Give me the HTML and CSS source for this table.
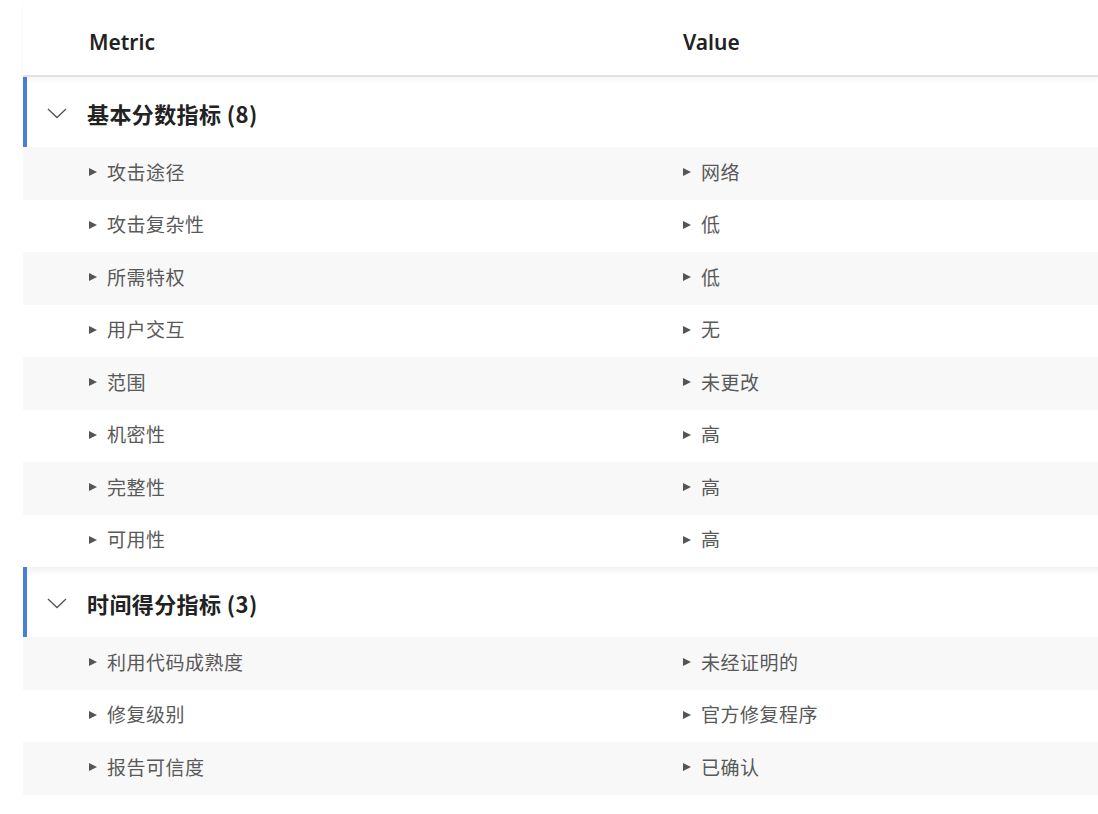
FILE: index.html
```html
<!DOCTYPE html>
<html lang="zh-CN">
<head>
<meta charset="utf-8">
<title>Metrics</title>
<link rel="stylesheet" href="styles.css">
</head>
<body>
<div class="table">
  <div class="head">
    <div class="col">Metric</div>
    <div class="col">Value</div>
  </div>

  <div class="group">
    <div class="ghead">
      <svg class="chev" width="20" height="11" viewBox="0 0 20 11"><polyline points="1,1 10,9.5 19,1" fill="none" stroke="#555" stroke-width="1.3"/></svg>
      <span class="gtitle">基本分数指标 (8)</span>
    </div>
    <div class="row alt"><div class="cell"><i class="tri"></i>攻击途径</div><div class="cell"><i class="tri"></i>网络</div></div>
    <div class="row"><div class="cell"><i class="tri"></i>攻击复杂性</div><div class="cell"><i class="tri"></i>低</div></div>
    <div class="row alt"><div class="cell"><i class="tri"></i>所需特权</div><div class="cell"><i class="tri"></i>低</div></div>
    <div class="row"><div class="cell"><i class="tri"></i>用户交互</div><div class="cell"><i class="tri"></i>无</div></div>
    <div class="row alt"><div class="cell"><i class="tri"></i>范围</div><div class="cell"><i class="tri"></i>未更改</div></div>
    <div class="row"><div class="cell"><i class="tri"></i>机密性</div><div class="cell"><i class="tri"></i>高</div></div>
    <div class="row alt"><div class="cell"><i class="tri"></i>完整性</div><div class="cell"><i class="tri"></i>高</div></div>
    <div class="row"><div class="cell"><i class="tri"></i>可用性</div><div class="cell"><i class="tri"></i>高</div></div>
  </div>

  <div class="group second">
    <div class="ghead">
      <svg class="chev" width="20" height="11" viewBox="0 0 20 11"><polyline points="1,1 10,9.5 19,1" fill="none" stroke="#555" stroke-width="1.3"/></svg>
      <span class="gtitle">时间得分指标 (3)</span>
    </div>
    <div class="row alt"><div class="cell"><i class="tri"></i>利用代码成熟度</div><div class="cell"><i class="tri"></i>未经证明的</div></div>
    <div class="row"><div class="cell"><i class="tri"></i>修复级别</div><div class="cell"><i class="tri"></i>官方修复程序</div></div>
    <div class="row alt"><div class="cell"><i class="tri"></i>报告可信度</div><div class="cell"><i class="tri"></i>已确认</div></div>
  </div>
</div>
</body>
</html>
```

FILE: styles.css
```css
html, body {
  margin: 0;
  padding: 0;
  background: #ffffff;
  overflow: hidden;
}

body {
  font-family: "Noto Sans", "Noto Sans CJK SC", sans-serif;
  color: #222;
}

.table {
  margin-left: 23px;
}

.head {
  display: grid;
  grid-template-columns: 594px 1fr;
  height: 75px;
  padding-left: 66px;
  align-items: center;
  border-bottom: 2px solid #e2e2e2;
  box-shadow: 0 3px 4px rgba(0, 0, 0, 0.04);
  font-size: 21px;
  font-weight: 600;
  color: #222;
  position: relative;
  z-index: 1;
}

.head .col {
  padding-top: 8px;
}

.ghead {
  height: 70px;
  display: flex;
  align-items: center;
  border-left: 4px solid #4a7fd6;
  box-sizing: border-box;
  padding-left: 20px;
  padding-top: 1px;
}

.second .ghead {
  box-shadow: inset 0 9px 7px -6px rgba(0, 0, 0, 0.07);
}

.chev {
  display: block;
  margin-right: 20px;
  margin-top: 1px;
}

.gtitle {
  font-family: "Noto Sans CJK SC", "Noto Sans", sans-serif;
  font-size: 22px;
  font-weight: 600;
  color: #222;
  letter-spacing: 0.4px;
}

.row {
  display: grid;
  grid-template-columns: 594px 1fr;
  height: 52.5px;
  padding-left: 66px;
  padding-bottom: 4px;
  box-sizing: border-box;
  align-items: center;
  font-family: "Noto Sans CJK SC", sans-serif;
  font-size: 19px;
  color: #595959;
  letter-spacing: 0.5px;
}

.row.alt {
  background: #f8f8f8;
}

.cell {
  display: flex;
  align-items: center;
}

.tri {
  display: inline-block;
  width: 0;
  height: 0;
  border-top: 4.5px solid transparent;
  border-bottom: 4.5px solid transparent;
  border-left: 8px solid #555;
  margin-right: 10px;
  margin-top: 2px;
}
```
